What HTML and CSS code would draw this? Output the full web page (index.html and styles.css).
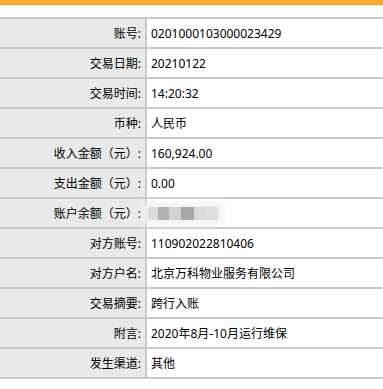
FILE: index.html
```html
<!DOCTYPE html>
<html>
<head>
<meta charset="utf-8">
<link rel="stylesheet" href="styles.css">
</head>
<body>
<div class="topbar"></div>
<div class="detail">
  <div class="row"><div class="label">账号:</div><div class="value">0201000103000023429</div></div>
  <div class="row"><div class="label">交易日期:</div><div class="value">20210122</div></div>
  <div class="row"><div class="label">交易时间:</div><div class="value">14:20:32</div></div>
  <div class="row"><div class="label">币种:</div><div class="value">人民币</div></div>
  <div class="row"><div class="label">收入金额（元）:</div><div class="value">160,924.00</div></div>
  <div class="row"><div class="label">支出金额（元）:</div><div class="value">0.00</div></div>
  <div class="row"><div class="label">账户余额（元）:</div><div class="value"><span class="mosaic"><i class="m1"></i><i class="m2"></i><i class="m3"></i><i class="m4"></i><i class="m5"></i><i class="m6"></i></span></div></div>
  <div class="row"><div class="label">对方账号:</div><div class="value">110902022810406</div></div>
  <div class="row"><div class="label">对方户名:</div><div class="value">北京万科物业服务有限公司</div></div>
  <div class="row"><div class="label">交易摘要:</div><div class="value">跨行入账</div></div>
  <div class="row"><div class="label">附言:</div><div class="value">2020年8月-10月运行维保</div></div>
  <div class="row last"><div class="label">发生渠道:</div><div class="value">其他</div></div>
</div>
</body>
</html>
```
FILE: styles.css
```css
html, body {
  margin: 0;
  padding: 0;
  background: #ffffff;
}
body {
  font-family: "Noto Sans", "Noto Sans CJK SC", sans-serif;
  font-size: 12px;
  color: #000000;
}
.topbar {
  height: 4px;
  background: #f7ab3b;
  border-bottom: 1px solid #f19a10;
}
.detail {
  margin-top: 12px;
}
.row {
  display: flex;
  height: 28px;
  border-top: 2px solid #c9c9c9;
}
.row.last {
  border-bottom: 2px solid #c9c9c9;
}
.label {
  width: 141px;
  flex: none;
  padding-right: 4px;
  background: #e8e9e8;
  border-right: 2px solid #c9c9c9;
  display: flex;
  align-items: center;
  justify-content: flex-end;
  white-space: nowrap;
}
.value {
  flex: 1;
  padding-left: 4px;
  display: flex;
  align-items: center;
  white-space: nowrap;
}
.mosaic {
  display: flex;
  height: 13px;
  margin-left: -3px;
  padding: 0;
  box-shadow: 0 0 6px 5px #f3f3f3;
  background: #f3f3f3;
  filter: blur(0.6px);
}
.mosaic i {
  display: block;
  height: 13px;
}
.m1 { width: 10px; background: #dcdcdc; }
.m2 { width: 11px; background: #b3b1b4; }
.m3 { width: 12px; background: #d3d3d3; }
.m4 { width: 13px; background: #a9a6a9; }
.m5 { width: 11px; background: #d6d9dd; }
.m6 { width: 13px; background: #dfdfdf; }
```
